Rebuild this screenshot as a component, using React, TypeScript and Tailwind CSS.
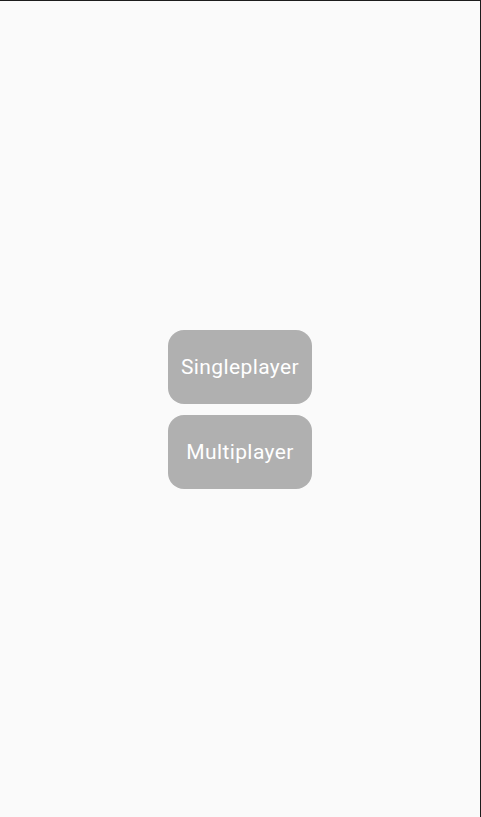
import React from 'react';

const MenuButton: React.FC<{ label: string }> = ({ label }) => (
  <button
    type="button"
    className="flex h-[74px] w-[144px] items-center justify-center rounded-[16px] bg-[#b0b0b0] pt-[2px] text-[21px] tracking-[0.4px] text-white"
    style={{ fontFamily: 'Roboto, "Noto Sans", sans-serif' }}
  >
    {label}
  </button>
);

export default function App() {
  return (
    <div className="flex h-[817px] w-[481px] flex-col items-center justify-center gap-[11px] border-t border-r border-[#1c1c1c] bg-[#fafafa]">
      <MenuButton label="Singleplayer" />
      <MenuButton label="Multiplayer" />
    </div>
  );
}
